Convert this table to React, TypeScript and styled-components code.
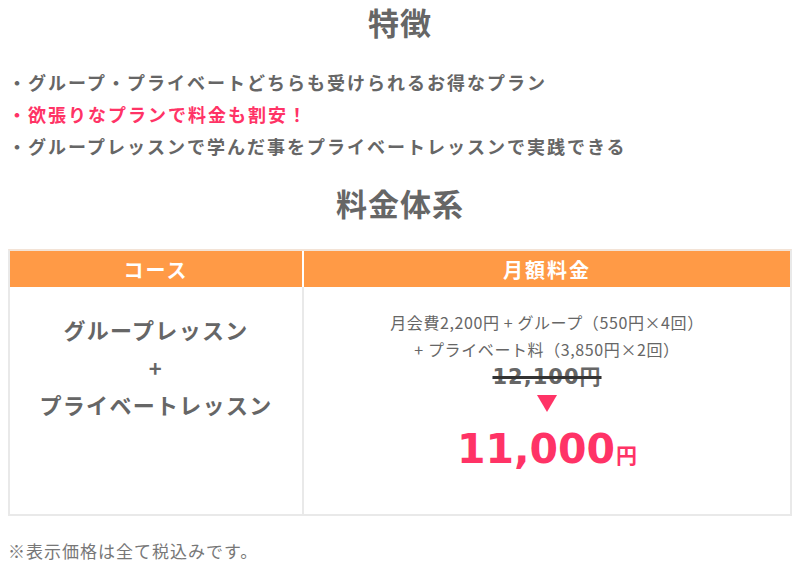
import styled, { createGlobalStyle } from "styled-components";

const GlobalStyle = createGlobalStyle`
  body {
    margin: 0;
    background: #fff;
    font-family: "Noto Sans CJK JP", "Noto Sans", sans-serif;
    color: #666;
  }
`;

const Wrapper = styled.div`
  width: 784px;
  margin-left: 8px;
  padding-top: 4px;
`;

const Heading = styled.h2<{ $top?: number }>`
  margin: ${(p) => p.$top ?? 0}px 0 0;
  font-size: 31px;
  line-height: 36px;
  font-weight: 700;
  letter-spacing: 1px;
  text-align: center;
  color: #666;
`;

const FeatureList = styled.ul`
  list-style: none;
  margin: 26px 0 0;
  padding: 0;
`;

const Feature = styled.li<{ $accent?: boolean }>`
  font-size: 18px;
  line-height: 32px;
  font-weight: 700;
  letter-spacing: 2px;
  color: ${(p) => (p.$accent ? "#ff3366" : "#666")};
`;

const PriceTable = styled.div`
  margin-top: 28px;
  display: grid;
  grid-template-columns: 292px 1fr;
  border: 2px solid #e9e9e9;
  border-top-color: #f3e3d6;
`;

const HeadCell = styled.div<{ $divider?: boolean }>`
  height: 36px;
  display: flex;
  align-items: center;
  justify-content: center;
  background: #ff9a46;
  color: #fff;
  font-size: 20px;
  font-weight: 700;
  letter-spacing: 2px;
  border-left: ${(p) => (p.$divider ? "2px solid #fff" : "none")};
`;

const BodyCell = styled.div<{ $divider?: boolean }>`
  height: 227px;
  box-sizing: border-box;
  text-align: center;
  border-left: ${(p) => (p.$divider ? "2px solid #e9e9e9" : "none")};
`;

const CourseCell = styled(BodyCell)`
  padding-top: 24px;
  font-size: 22px;
  line-height: 37.5px;
  font-weight: 700;
  letter-spacing: 1.3px;
`;

const FeeCell = styled(BodyCell)`
  padding-top: 22px;
  display: flex;
  flex-direction: column;
  align-items: center;
`;

const FeeLine = styled.div`
  font-size: 16px;
  line-height: 27px;
  letter-spacing: 0.6px;
  color: #666;
`;

const OldPrice = styled.div`
  font-family: "DejaVu Sans", "Noto Sans CJK JP", sans-serif;
  font-size: 21px;
  line-height: 28px;
  font-weight: 700;
  letter-spacing: 1px;
  color: #666;
  text-decoration: line-through;
  text-decoration-color: #333;
  text-decoration-thickness: 3px;
`;

const Arrow = styled.div`
  margin-top: 4px;
  width: 0;
  height: 0;
  border-left: 10px solid transparent;
  border-right: 10px solid transparent;
  border-top: 17px solid #ff3366;
`;

const NewPrice = styled.div`
  margin-top: 13px;
  font-family: "DejaVu Sans", "Noto Sans CJK JP", sans-serif;
  font-size: 41px;
  line-height: 48px;
  font-weight: 700;
  color: #ff3366;
`;

const Yen = styled.span`
  font-family: "Noto Sans CJK JP", sans-serif;
  font-size: 21px;
  margin-left: 1px;
`;

const Note = styled.p`
  margin: 22px 0 0;
  font-size: 17px;
  line-height: 26px;
  letter-spacing: 1px;
  color: #777;
`;

export default function App() {
  return (
    <>
      <GlobalStyle />
      <Wrapper>
        <Heading>特徴</Heading>
        <FeatureList>
          <Feature>・グループ・プライベートどちらも受けられるお得なプラン</Feature>
          <Feature $accent>・欲張りなプランで料金も割安！</Feature>
          <Feature>・グループレッスンで学んだ事をプライベートレッスンで実践できる</Feature>
        </FeatureList>

        <Heading $top={23}>料金体系</Heading>

        <PriceTable>
          <HeadCell>コース</HeadCell>
          <HeadCell $divider>月額料金</HeadCell>
          <CourseCell>
            グループレッスン
            <br />+<br />
            プライベートレッスン
          </CourseCell>
          <FeeCell $divider>
            <FeeLine>月会費2,200円 + グループ（550円×4回）</FeeLine>
            <FeeLine>+ プライベート料（3,850円×2回）</FeeLine>
            <OldPrice>12,100円</OldPrice>
            <Arrow />
            <NewPrice>
              11,000<Yen>円</Yen>
            </NewPrice>
          </FeeCell>
        </PriceTable>

        <Note>※表示価格は全て税込みです。</Note>
      </Wrapper>
    </>
  );
}
